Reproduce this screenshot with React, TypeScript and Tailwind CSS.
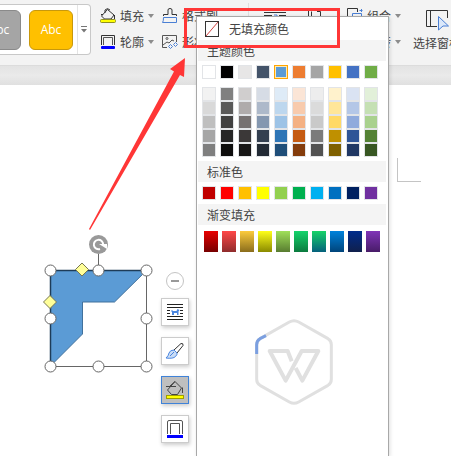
import type { ReactNode } from 'react'

const themeColors = ['#ffffff', '#000000', '#e7e6e6', '#44546a', '#5b9bd5', '#ed7d31', '#a5a5a5', '#ffc000', '#4472c4', '#70ad47']

const themeShades = [
  ['#f2f2f2', '#808080', '#d0cece', '#d6dce5', '#deebf7', '#fbe5d6', '#ededed', '#fff2cc', '#dae3f3', '#e2f0d9'],
  ['#d9d9d9', '#595959', '#afabab', '#adb9ca', '#bdd7ee', '#f8cbad', '#dbdbdb', '#ffe699', '#b4c7e7', '#c5e0b4'],
  ['#bfbfbf', '#404040', '#767171', '#8497b0', '#9dc3e6', '#f4b183', '#c9c9c9', '#ffd966', '#8faadc', '#a9d18e'],
  ['#a6a6a6', '#262626', '#3b3838', '#333f50', '#2e75b6', '#c55a11', '#7b7b7b', '#bf9000', '#2f5597', '#548235'],
  ['#7f7f7f', '#0d0d0d', '#181717', '#222a35', '#1f4e79', '#843c0c', '#525252', '#7f6000', '#203864', '#385723'],
]

const standardColors = ['#c00000', '#ff0000', '#ffc000', '#ffff00', '#92d050', '#00b050', '#00b0f0', '#0070c0', '#002060', '#7030a0']

const gradients = [
  ['#e80000', '#760000'],
  ['#ff4747', '#8f2c2c'],
  ['#fccb3c', '#8a6d1c'],
  ['#ffff1a', '#8a8a00'],
  ['#a0e05a', '#587c30'],
  ['#14d46c', '#0b7a3e'],
  ['#16d468', '#05607c'],
  ['#0082dc', '#00447a'],
  ['#002c8c', '#10204c'],
  ['#8034b8', '#481c68'],
]

function Swatch({ color, selected }: { color: string; selected?: boolean }) {
  return (
    <button
      aria-label={color}
      className={
        selected
          ? 'block size-[14px] border border-[#ffa500] shadow-[inset_0_0_0_1px_#ffe9b0]'
          : 'block size-[14px] border border-[#e2e4e7]'
      }
      style={{ backgroundColor: color }}
    />
  )
}

function SwatchGrid({ colors, selected }: { colors: string[]; selected?: number }) {
  return (
    <div className="grid w-max grid-cols-10 gap-x-1 pl-[5px]">
      {colors.map((color, i) => (
        <Swatch key={i} color={color} selected={i === selected} />
      ))}
    </div>
  )
}

function SectionTitle({ children }: { children: ReactNode }) {
  return <h3 className="mr-0.5 ml-px h-[21px] bg-[#f4f4f4] pl-[9px] leading-[21px]">{children}</h3>
}

function Caret() {
  return (
    <svg width="6" height="4" viewBox="0 0 6 4" className="shrink-0">
      <path d="M0 0h6L3 4z" fill="#8c8c8c" />
    </svg>
  )
}

function BucketIcon() {
  return (
    <svg width="16" height="16" viewBox="0 0 16 16" fill="none" stroke="#333" className="shrink-0">
      <path d="M7.5 1.5 14 7l-3 4H4.500L1.500 8z" strokeLinejoin="round" />
      <path d="M5 5V2Q7.500-.8 10 2M1 6.500h2M14.500 7v4" />
      <rect x=".5" y="11.5" width="15" height="3" rx="1" fill="#ffff00" stroke="#8f8f20" />
    </svg>
  )
}

function OutlineIcon() {
  return (
    <svg width="16" height="16" viewBox="0 0 16 16" fill="none" stroke="#333" className="shrink-0">
      <path d="M1.5 11V1.5h13V11" />
      <path d="M3.5 11V3.5h9V11" stroke="#555" />
      <rect x="1" y="12" width="14" height="3" rx="1" fill="#0000ff" stroke="none" />
    </svg>
  )
}

function FormatBrushIcon() {
  return (
    <svg width="16" height="16" viewBox="0 0 16 16" fill="none" className="shrink-0">
      <path d="M1.5 8V6.5H6V2q0-1.500 2-1.500T10 2v4.500h4.500V8" stroke="#333" />
      <path d="M1.500 9.500h13v5H.5q1-1 1-5z" stroke="#4a7fd4" />
    </svg>
  )
}

function EffectIcon() {
  return (
    <svg width="16" height="16" viewBox="0 0 16 16" fill="none" className="shrink-0">
      <path d="M5 13.5H.5v-12h14V8M1 11l4-3 2 1 3-3 2 1" stroke="#555" />
      <circle cx="5" cy="4.5" r="1" stroke="#555" />
      <path d="m8.5 10.500 2 2-2 2-2-2zM13.500 8.500l2 2-2 2-2-2z" stroke="#4a7fd4" />
    </svg>
  )
}

function CombineIcon() {
  return (
    <svg width="16" height="16" viewBox="0 0 16 16" fill="none" className="shrink-0">
      <path d="M10.5 4V.5H.5v11h4" stroke="#333" />
      <path d="M5.5 5.5h9v9h-9zM14.5 1v3M12.500 2.500h3" stroke="#4a7fd4" />
    </svg>
  )
}

function RotateIcon() {
  return (
    <svg width="16" height="16" viewBox="0 0 16 16" fill="none" className="shrink-0">
      <path d="M7 2v12H1zM10 2v12h5z" stroke="#333" />
    </svg>
  )
}

function RibbonButton({ icon, label, caret }: { icon: ReactNode; label: string; caret?: boolean }) {
  return (
    <button className="flex h-[26px] items-center gap-1 whitespace-nowrap">
      {icon}
      {label}
      {caret && <Caret />}
    </button>
  )
}

function Ribbon() {
  return (
    <header className="flex h-[66px] overflow-hidden border-b border-[#dcdcdc] bg-[#f3f3f3] pt-[3px]">
      <div className="mt-px flex h-[51px] w-[91px] shrink-0 rounded-r border border-l-0 border-[#c8c8c8] bg-white">
        <div className="flex flex-1 items-center justify-end gap-2 overflow-hidden border-r border-[#e4e4e4] pr-1 font-['Open_Sans',sans-serif]">
          <button className="h-10 w-11 shrink-0 rounded-md border border-[#8a8a8a] bg-[#a5a5a5] text-white">Abc</button>
          <button className="h-10 w-11 shrink-0 rounded-md border border-[#c8980c] bg-[#ffc000] text-white">Abc</button>
        </div>
        <button aria-label="更多样式" className="flex w-3 items-center justify-center">
          <svg width="6" height="7" viewBox="0 0 6 7">
            <path d="M0 .5h6" stroke="#777" />
            <path d="M0 3h6L3 6.5z" fill="#777" />
          </svg>
        </button>
      </div>
      <div className="ml-[9px] shrink-0">
        <RibbonButton icon={<BucketIcon />} label="填充" caret />
        <RibbonButton icon={<OutlineIcon />} label="轮廓" caret />
      </div>
      <div className="ml-2 w-[78px] shrink-0">
        <RibbonButton icon={<FormatBrushIcon />} label="格式刷" />
        <RibbonButton icon={<EffectIcon />} label="形状效果" />
      </div>
      <div className="ml-2 h-[52px] w-px shrink-0 bg-[#dedede]" />
      <button aria-label="环绕" className="ml-1 w-11 shrink-0 self-start pt-2">
        <svg width="24" height="22" viewBox="0 0 24 22" fill="none" className="mx-auto">
          <path d="M1 1.5h22M1 4.5h8M16 4.5h7M1 9.5h7M16 9.5h7M1 13.5h22" stroke="#333" />
          <path d="M11 4h3v5h-3" stroke="#4a7fd4" />
        </svg>
      </button>
      <button aria-label="对齐" className="w-9 shrink-0 self-start pt-2">
        <svg width="16" height="22" viewBox="0 0 16 22" fill="none" className="mx-auto">
          <path d="M1.5 0v22M4.5 18V.5M13.5 18V.5H10" stroke="#333" />
        </svg>
      </button>
      <div className="ml-[14px] shrink-0">
        <RibbonButton icon={<CombineIcon />} label="组合" caret />
        <RibbonButton icon={<RotateIcon />} label="旋转" caret />
      </div>
      <button className="ml-3 flex shrink-0 flex-col items-center gap-1 self-start pt-[6px] whitespace-nowrap">
        <svg width="24" height="22" viewBox="0 0 24 22" fill="none">
          <path d="M12 17.5H1.5v-16h21V9M5.5 2v15" stroke="#333" />
          <path d="M13.500 7.500 23.500 17h-5.500l-4.500 4z" fill="#dbe8fa" stroke="#4a7fd4" />
        </svg>
        <span className="leading-4">选择窗格</span>
      </button>
    </header>
  )
}

function SelectedShape() {
  const handles = [
    [10, 36],
    [58, 36],
    [106, 36],
    [10, 84],
    [106, 84],
    [10, 132],
    [58, 132],
    [106, 132],
  ]

  return (
    <svg width="116" height="142" viewBox="0 0 116 142" className="absolute top-[234px] left-10">
      <path d="M10.5 36.5h96v96h-96zM58.5 20v16" fill="none" stroke="#666" />
      <path d="M10.5 36.5h96l-32 31.5h-32v32l-32 32z" fill="#5b9bd5" stroke="#41719c" />
      <path d="M10.5 132V36.5H106" fill="none" stroke="#1e3c58" strokeWidth="1.5" />
      {handles.map(([x, y]) => (
        <circle key={`${x}-${y}`} cx={x + 0.5} cy={y + 0.5} r="5.5" fill="#fff" stroke="#666" />
      ))}
      <path d="m42 29 6.500 6.500-6.500 6.500-6.500-6.500zM10 61.500l6.500 6.500-6.500 6.500L3.500 68z" fill="#ffff99" stroke="#777750" />
      <circle cx="58.5" cy="10.5" r="9.5" fill="#999" />
      <path d="M60 15A4.700 4.700 0 1 1 63.200 10.500" fill="none" stroke="#fff" strokeWidth="2" />
      <path d="M59 10h8v5z" fill="#fff" />
    </svg>
  )
}

function ToolButton({ label, active, children }: { label: string; active?: boolean; children: ReactNode }) {
  return (
    <button
      aria-label={label}
      className={
        active
          ? 'flex size-7 items-center justify-center border border-[#3f82d8] bg-[#bfbfbf] shadow-[1px_2px_4px_#0003]'
          : 'flex size-7 items-center justify-center border border-[#cccccc] bg-white shadow-[1px_2px_4px_#0003]'
      }
    >
      {children}
    </button>
  )
}

function FloatingToolbar() {
  return (
    <div className="absolute top-[272px] left-[161px] flex flex-col items-center gap-2">
      <button aria-label="收起" className="flex size-[18px] items-center justify-center rounded-full border border-[#c4c4c4] bg-white">
        <span className="h-0.5 w-2 bg-[#999]" />
      </button>
      <div className="flex flex-col gap-[11px]">
        <ToolButton label="布局选项">
          <svg width="18" height="18" viewBox="0 0 18 18" fill="none">
            <path d="M1 1.5h16M1 4.5h16M1 7.5h3M14 7.5h3M1 10.5h3M14 10.5h3M1 13.5h16M1 16.5h16" stroke="#222" />
            <path d="m5 8 1-1 1 1h3.500L11.500 6l2 1-1 1.500V12H11v-2H8v2H6V9z" fill="#4a86e0" />
          </svg>
        </ToolButton>
        <ToolButton label="形状样式">
          <svg width="20" height="18" viewBox="0 0 20 18" fill="none" strokeLinejoin="round">
            <path d="m9 8 7-6.500q2.500-.5 2 2L12 11z" stroke="#333" />
            <path d="M9 8q-4 0-5 3-.5 3-3 5 7 1 9.500-1.500 2-2 1.500-3.500zM5 14l4-4" fill="#c9dcf5" stroke="#4a86e0" />
          </svg>
        </ToolButton>
        <ToolButton label="形状填充" active>
          <svg width="18" height="18" viewBox="0 0 18 18" fill="none" stroke="#444">
            <path d="m9 .5 6.500 6.500-4 6.500h-6L1.500 9z" />
            <path d="M0 5.5h10M4 5l5-4.500M16.5 6.5V12" />
            <rect x=".5" y="14.5" width="17" height="3" fill="#ffff00" stroke="#a0a000" />
          </svg>
        </ToolButton>
        <ToolButton label="形状轮廓">
          <svg width="18" height="18" viewBox="0 0 18 18" fill="none" stroke="#555">
            <path d="M1.5 14V2q0-1.500 1.500-1.500h12q1.500 0 1.500 1.500v12" />
            <path d="M4.5 14V3.5h9V14" />
            <path d="M1 16.5h16" stroke="#0000ff" strokeWidth="3" />
          </svg>
        </ToolButton>
      </div>
    </div>
  )
}

function FillMenu() {
  return (
    <div className="absolute top-4 bottom-0 left-[196px] w-[193px] overflow-hidden border border-b-0 border-[#a8a8a8] bg-white shadow-[1px_1px_4px_#0002]">
      <button className="flex h-[23px] w-full items-center gap-[10px] pl-2">
        <svg width="14" height="16" viewBox="0 0 14 16" fill="none">
          <path d="M1 15 13 1" stroke="#d34545" />
          <rect x=".5" y=".5" width="13" height="15" stroke="#333" />
        </svg>
        无填充颜色
      </button>
      <SectionTitle>主题颜色</SectionTitle>
      <div className="mt-1">
        <SwatchGrid colors={themeColors} selected={4} />
      </div>
      <div className="mt-2 mb-1">
        {themeShades.map((row, i) => (
          <SwatchGrid key={i} colors={row} />
        ))}
      </div>
      <SectionTitle>标准色</SectionTitle>
      <div className="my-1">
        <SwatchGrid colors={standardColors} />
      </div>
      <SectionTitle>渐变填充</SectionTitle>
      <div className="mt-[6px] grid w-max grid-cols-10 gap-x-1 pl-[7px]">
        {gradients.map(([from, to]) => (
          <button
            key={from}
            aria-label={from}
            className="h-[21px] w-[14px]"
            style={{ backgroundImage: `linear-gradient(${from}, ${to})` }}
          />
        ))}
      </div>
      <svg width="78" height="86" viewBox="0 0 234 258" fill="none" strokeLinejoin="round" className="mt-[67px] ml-[58px]">
        <path
          d="M103 9q14-8 28 0l88 50q10 6 10 18v104q0 12-10 18l-88 50q-14 8-28 0l-88-50q-10-6-10-18V77q0-12 10-18z"
          stroke="#e0e0e0"
          strokeWidth="9"
        />
        <path d="M5 105V77q0-12 10-18l18-9" stroke="#7b9fe0" strokeWidth="9" />
        <path d="m110 127-12-31H44l48 89 48-89h50l-48 89-20-38" stroke="#e0e0e0" strokeWidth="12" />
      </svg>
    </div>
  )
}

function Highlight() {
  return (
    <>
      <div className="pointer-events-none absolute top-2 left-[184px] h-10 w-[156px] border-3 border-[#ff3636]" />
      <svg width="100" height="176" viewBox="0 0 100 176" className="pointer-events-none absolute top-14 left-[86px]">
        <path d="M99 2 84 13l4 2.500L3 173l1 1L94 19l4 2z" fill="#ff3636" />
      </svg>
    </>
  )
}

export default function App() {
  return (
    <div className="relative flex min-h-screen flex-col overflow-hidden bg-white font-['Noto_Sans_CJK_SC',sans-serif] text-xs text-[#444]">
      <Ribbon />
      <div className="h-[19px] bg-linear-to-b from-[#e3e3e3] via-[#eaeaea] to-[#e0e0e0]" />
      <main className="flex-1 bg-white">
        <div className="absolute top-[158px] left-[397px] size-6 border-b border-l border-[#c4c4c4]" />
        <SelectedShape />
        <FloatingToolbar />
      </main>
      <FillMenu />
      <Highlight />
    </div>
  )
}
